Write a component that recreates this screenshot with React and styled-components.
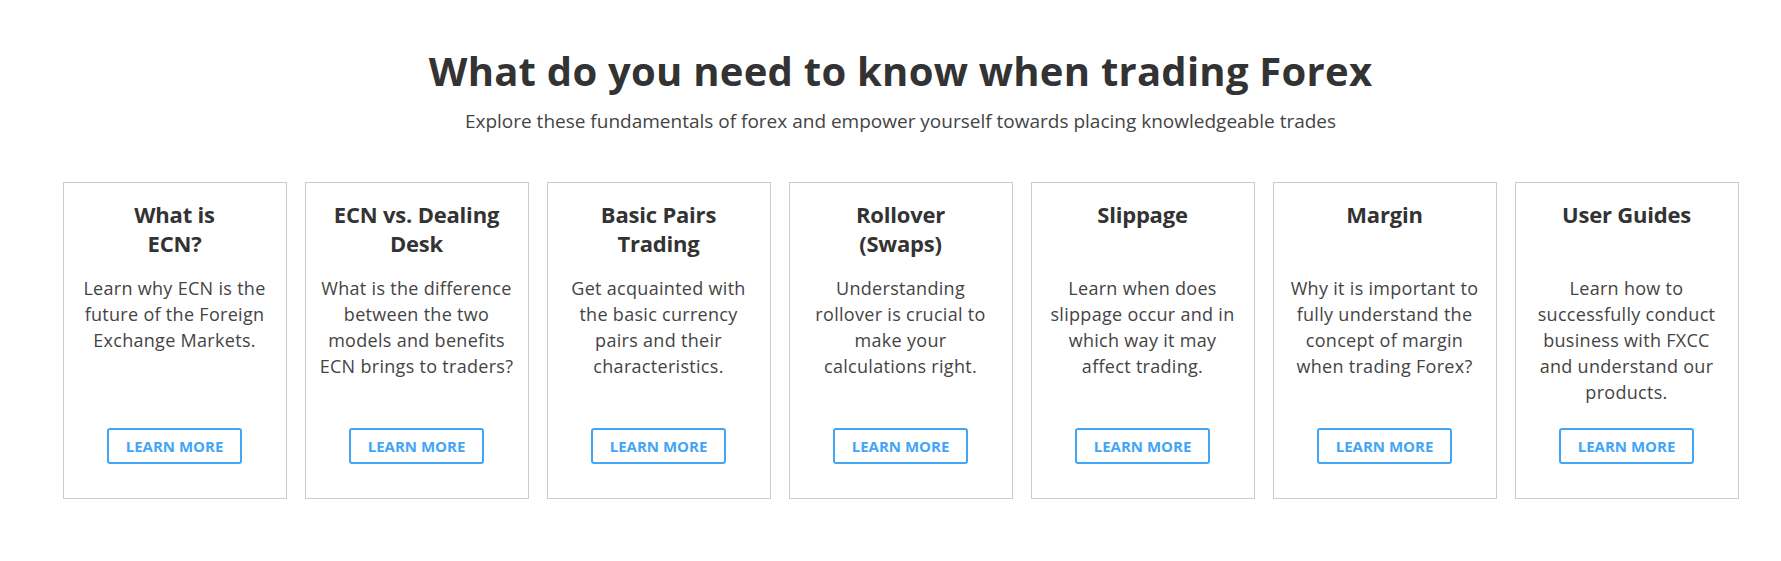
import React from 'react'
import styled, {createGlobalStyle} from 'styled-components'

const GlobalStyle = createGlobalStyle`
  html, body {
    margin: 0;
    padding: 0;
    background: #ffffff;
    font-family: 'Open Sans', 'Liberation Sans', sans-serif;
  }
`

const Section = styled.section`
  padding: 47px 0 40px 20px;
  text-align: center;
`

const Heading = styled.h2`
  margin: 0;
  color: #333333;
  font-size: 40px;
  font-weight: 700;
  line-height: 48px;
  letter-spacing: 0.25px;
`

const Lead = styled.p`
  margin: 13px 0 0;
  color: #444444;
  font-size: 19px;
  line-height: 27px;
`

const CardRow = styled.div`
  display: flex;
  justify-content: center;
  gap: 18px;
  margin-top: 47px;
`

const Card = styled.div`
  box-sizing: border-box;
  width: 224px;
  display: flex;
  flex-direction: column;
  align-items: center;
  padding: 17px 12px 34px;
  border: 1px solid #cccccc;
  background: #ffffff;
`

const CardTitle = styled.h3`
  margin: 0;
  min-height: 57px;
  color: #333333;
  font-size: 22px;
  font-weight: 700;
  line-height: 28.5px;
  letter-spacing: -0.2px;
`

const CardText = styled.p`
  margin: 18px 0 0;
  color: #444444;
  font-size: 18px;
  line-height: 26px;
  letter-spacing: 0.3px;
`

const LearnMore = styled.a`
  box-sizing: border-box;
  display: flex;
  align-items: center;
  justify-content: center;
  width: 135px;
  height: 36px;
  margin-top: auto;
  border: 2px solid #42a5f5;
  border-radius: 3px;
  color: #42a5f5;
  font-size: 15px;
  font-weight: 700;
  text-decoration: none;
  text-transform: uppercase;
`

const Spacer = styled.div`
  min-height: 23px;
  flex: 1;
`

const topics = [
  {title: ['What is', 'ECN?'], text: 'Learn why ECN is the future of the Foreign Exchange Markets.'},
  {title: ['ECN vs. Dealing', 'Desk'], text: 'What is the difference between the two models and benefits ECN brings to traders?'},
  {title: ['Basic Pairs', 'Trading'], text: 'Get acquainted with the basic currency pairs and their characteristics.'},
  {title: ['Rollover', '(Swaps)'], text: 'Understanding rollover is crucial to make your calculations right.'},
  {title: ['Slippage'], text: 'Learn when does slippage occur and in which way it may affect trading.'},
  {title: ['Margin'], text: 'Why it is important to fully understand the concept of margin when trading Forex?'},
  {title: ['User Guides'], text: 'Learn how to successfully conduct business with FXCC and understand our products.'},
]

const App = () => (
  <>
    <GlobalStyle/>
    <Section>
      <Heading>What do you need to know when trading Forex</Heading>
      <Lead>Explore these fundamentals of forex and empower yourself towards placing knowledgeable trades</Lead>
      <CardRow>
        {topics.map(topic => (
          <Card key={topic.title.join(' ')}>
            <CardTitle>
              {topic.title.map((line, i) => (
                <React.Fragment key={line}>{i > 0 && <br/>}{line}</React.Fragment>
              ))}
            </CardTitle>
            <CardText>{topic.text}</CardText>
            <Spacer/>
            <LearnMore href='#'>Learn more</LearnMore>
          </Card>
        ))}
      </CardRow>
    </Section>
  </>
)

export default App
